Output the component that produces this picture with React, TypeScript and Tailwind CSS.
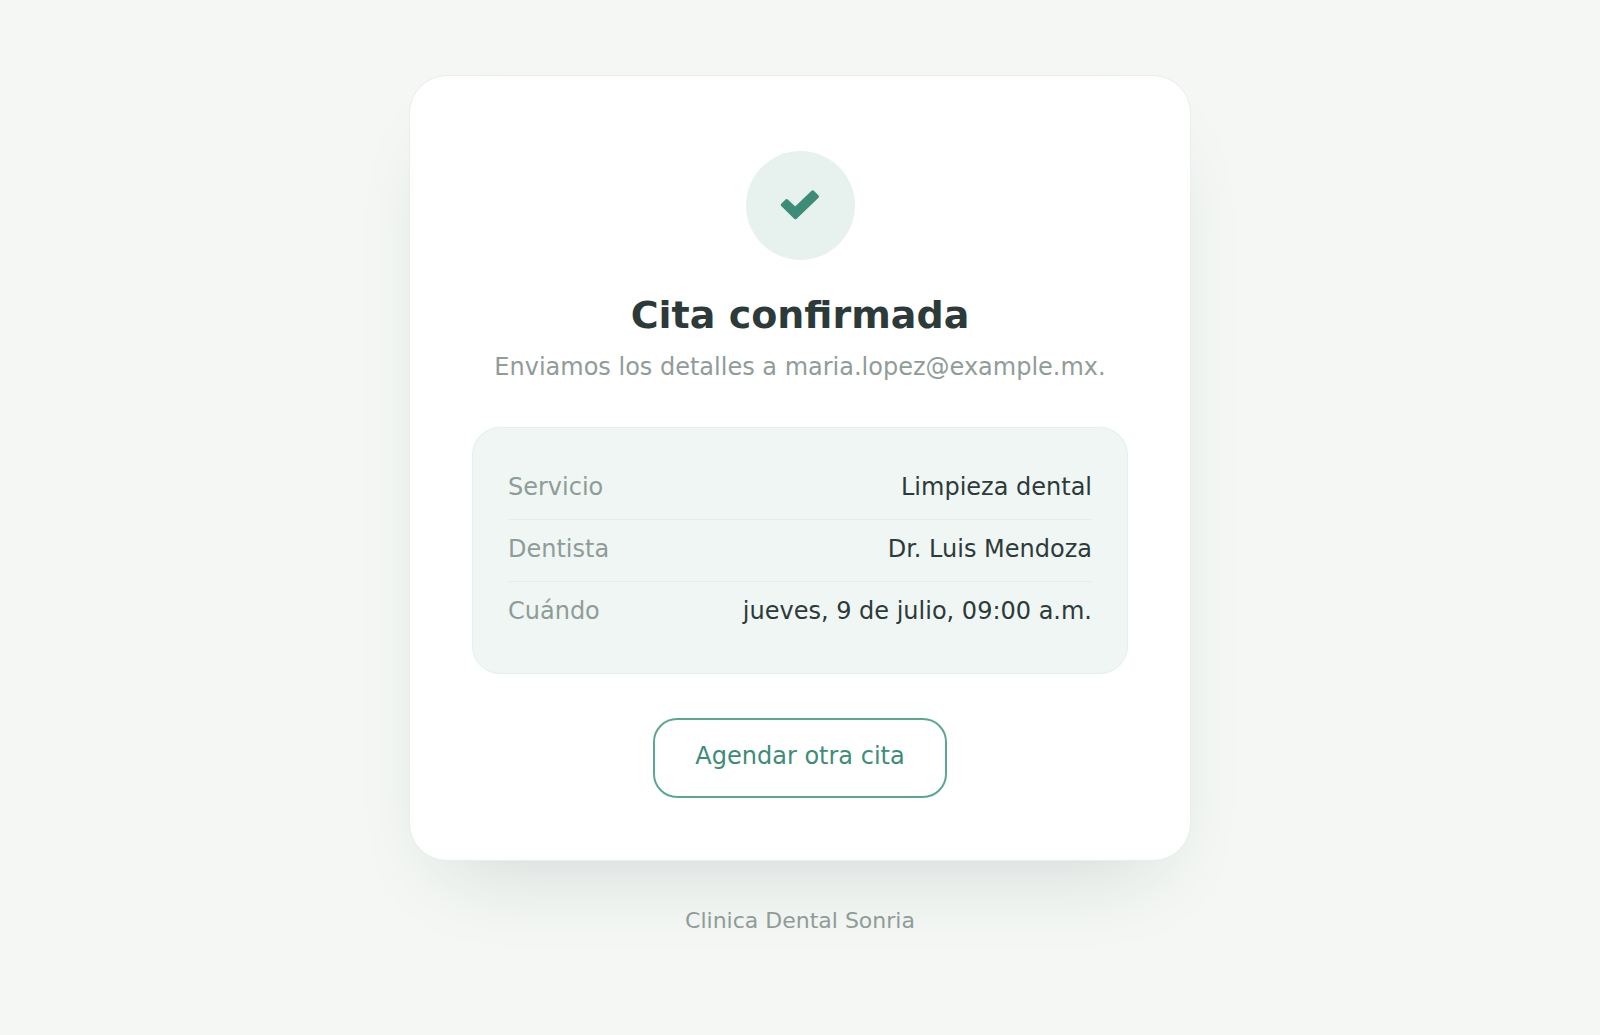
interface Detail {
  label: string;
  value: string;
}

const details: Detail[] = [
  { label: "Servicio", value: "Limpieza dental" },
  { label: "Dentista", value: "Dr. Luis Mendoza" },
  { label: "Cuándo", value: "jueves, 9 de julio, 09:00 a.m." },
];

function CheckBadge() {
  return (
    <div className="flex size-[109px] items-center justify-center rounded-full bg-[#e7f2ef]">
      <svg viewBox="0 0 40 32" className="h-8 w-10 text-[#3d8c78]" aria-hidden="true">
        <path
          d="M2.9 14.9 L6.7 11.1 L15.2 19.2 L32.7 2.4 L36.9 6.6 L15.3 27.2 Z"
          fill="currentColor"
          stroke="currentColor"
          strokeWidth="4"
          strokeLinejoin="round"
        />
      </svg>
    </div>
  );
}

export default function App() {
  return (
    <div className="flex min-h-screen flex-col items-center bg-[#f4f7f4] px-6 pt-[75px] pb-12 font-['DejaVu_Sans',sans-serif] text-[#2d3a3a]">
      <main className="flex w-full max-w-[782px] flex-col items-center rounded-[38px] border border-[#e8eeec] bg-white px-[62px] pt-[75px] pb-[62px] shadow-[0_41px_82px_-41px_rgba(35,62,66,0.18)]">
        <CheckBadge />
        <h1 className="mt-[29px] text-center text-[38px] leading-[52px] font-bold">Cita confirmada</h1>
        <p className="mt-2 text-center text-2xl leading-9 text-[#8f9c98]">
          Enviamos los detalles a maria.lopez@example.mx.
        </p>

        {/* Appointment summary */}
        <dl className="mt-[42px] w-full rounded-[28px] border border-[#e5efec] bg-[#eff6f3] px-[35px] pt-[30px] pb-8">
          {details.map((detail) => (
            <div
              key={detail.label}
              className="flex justify-between border-b border-[#e5eceb] pt-[11px] pb-[14px] text-2xl leading-9 last:border-b-0 last:pb-3"
            >
              <dt className="text-[#8f9c98]">{detail.label}</dt>
              <dd className="text-right">{detail.value}</dd>
            </div>
          ))}
        </dl>

        <button
          type="button"
          className="mt-11 cursor-pointer rounded-3xl border-2 border-[#5aa893] bg-white px-10 pt-[18px] pb-[22px] text-2xl leading-9 text-[#3d8c78]"
        >
          Agendar otra cita
        </button>
      </main>

      <footer className="mt-[45px] text-[22px] leading-[30px] text-[#8f9c98]">Clinica Dental Sonria</footer>
    </div>
  );
}
